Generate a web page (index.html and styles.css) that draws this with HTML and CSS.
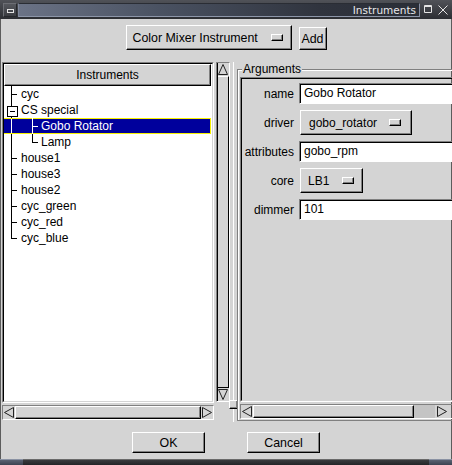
FILE: index.html
```html
<!DOCTYPE html>
<html>
<head>
<meta charset="utf-8">
<title>Instruments</title>
<link rel="stylesheet" href="styles.css">
</head>
<body>
<div class="window">
  <div class="titlebar">
    <div class="tb-menu"><span class="tb-min"></span></div>
    <div class="tb-caption">Instruments</div>
    <div class="tb-btn"><svg width="9" height="9" viewBox="0 0 9 9"><path d="M0.5 0.5H7.5V7.5H0.5Z M0.5 1.5H7.5" fill="none" stroke="#e4e4e4"/></svg></div>
    <div class="tb-btn"><svg width="10" height="10" viewBox="0 0 10 10"><path d="M0.5 0.5L9.5 9.5M9.5 0.5L0.5 9.5" fill="none" stroke="#e4e4e4"/></svg></div>
  </div>
  <div class="client">
    <div class="toolbar">
      <div class="combo combo-main"><span class="combo-text">Color Mixer Instrument</span><i class="ind"></i></div>
      <div class="btn btn-add">Add</div>
    </div>
    <div class="panes">
      <div class="left">
        <div class="tree">
          <div class="tree-inner">
            <div class="tree-header">Instruments</div>
            <div class="tree-body">
              <div class="node">cyc</div>
              <div class="node open">CS special</div>
              <div class="node child selected">Gobo Rotator</div>
              <div class="node child child-last">Lamp</div>
              <div class="node">house1</div>
              <div class="node">house3</div>
              <div class="node">house2</div>
              <div class="node">cyc_green</div>
              <div class="node">cyc_red</div>
              <div class="node last">cyc_blue</div>
            </div>
          </div>
        </div>
        <div class="hscroll hscroll-left">
          <div class="arrow"><svg width="12" height="13" viewBox="0 0 12 13"><path d="M1.5 6.5L10.5 1.5V11.5Z" fill="none" stroke="#222"/></svg></div>
          <div class="thumb-h"></div>
          <div class="arrow"><svg width="12" height="13" viewBox="0 0 12 13"><path d="M10.5 6.5L1.5 1.5V11.5Z" fill="none" stroke="#222"/></svg></div>
        </div>
      </div>
      <div class="vscroll">
        <div class="varrow"><svg width="12" height="13" viewBox="0 0 12 13"><path d="M6 1.5L10.5 11.5H1.5Z" fill="none" stroke="#222"/></svg></div>
        <div class="thumb-v"></div>
        <div class="varrow"><svg width="12" height="13" viewBox="0 0 12 13"><path d="M6 11.5L10.5 1.5H1.5Z" fill="none" stroke="#222"/></svg></div>
      </div>
      <div class="splitter"><div class="handle"></div></div>
      <div class="right">
        <div class="group">
          <div class="group-title">Arguments</div>
          <div class="args-frame">
            <div class="args">
              <div class="form">
                <div class="lbl">name</div>
                <div class="input">Gobo Rotator</div>
                <div class="lbl">driver</div>
                <div class="combo combo-driver"><span class="combo-text">gobo_rotator</span><i class="ind"></i></div>
                <div class="lbl">attributes</div>
                <div class="input">gobo_rpm</div>
                <div class="lbl">core</div>
                <div class="combo combo-core"><span class="combo-text">LB1</span><i class="ind"></i></div>
                <div class="lbl">dimmer</div>
                <div class="input">101</div>
              </div>
            </div>
          </div>
          <div class="hscroll hscroll-right">
            <div class="arrow"><svg width="12" height="13" viewBox="0 0 12 13"><path d="M1.5 6.5L10.5 1.5V11.5Z" fill="none" stroke="#222"/></svg></div>
            <div class="thumb-h thumb-r"></div>
            <div class="trough"></div>
            <div class="arrow arrow-r"><svg width="12" height="13" viewBox="0 0 12 13"><path d="M10.5 6.5L1.5 1.5V11.5Z" fill="none" stroke="#222"/></svg></div>
          </div>
        </div>
      </div>
    </div>
    <div class="buttons">
      <div class="btn btn-dlg">OK</div>
      <div class="btn btn-dlg">Cancel</div>
    </div>
  </div>
  <div class="bottombar"><div class="grip"></div><div class="grip"></div></div>
</div>
</body>
</html>
```
FILE: styles.css
```css
* { box-sizing: border-box; }
html, body { margin: 0; padding: 0; }
body {
  font-family: "Liberation Sans", Arial, sans-serif;
  font-size: 12px;
  color: #000;
  background: #d4d4d4;
}
.window {
  width: 452px;
  height: 465px;
  display: flex;
  flex-direction: column;
  overflow: hidden;
  background: #d4d4d4;
}

/* title bar */
.titlebar {
  height: 19px;
  flex: none;
  display: flex;
  align-items: center;
  padding: 0 2px 0 3px;
  background: linear-gradient(#505258, #2c2e33);
}
.tb-menu {
  width: 14px;
  height: 14px;
  display: flex;
  align-items: center;
  justify-content: center;
  background: linear-gradient(#56585e, #3a3c41);
  border: 1px solid;
  border-color: #6c6e74 #26282c #26282c #6c6e74;
}
.tb-min {
  width: 7px;
  height: 4px;
  margin-top: 3px;
  border: 1px solid #e2e2e2;
}
.tb-caption {
  flex: 1;
  height: 14px;
  margin-left: 1px;
  border: 1px solid;
  border-color: #2a2d34 #8890a3 #8d96a9 #7e879a;
  background: linear-gradient(to right, #6b7386, #4a5262 35%, #30343e 75%, #2a2e37);
  color: #e8e8ea;
  font-family: "DejaVu Sans", sans-serif;
  font-size: 10.5px;
  line-height: 12px;
  text-align: right;
  padding-right: 3px;
}
.tb-btn {
  width: 14px;
  height: 14px;
  margin-left: 1px;
  display: flex;
  align-items: center;
  justify-content: center;
}
.tb-btn:first-of-type { margin-left: 2px; }

/* client */
.client {
  flex: 1;
  display: flex;
  flex-direction: column;
  border-left: 1px solid #5c5c5c;
  border-right: 1px solid #5c5c5c;
}
.toolbar {
  height: 43px;
  flex: none;
  display: flex;
  justify-content: center;
  align-items: flex-start;
  gap: 7px;
  padding-top: 6px;
}

/* raised widgets */
.combo, .btn {
  background: #d4d4d4;
  border: 1px solid;
  border-color: #fff #000 #000 #fff;
  box-shadow: inset -1px -1px #808080;
}
.combo {
  height: 25px;
  display: flex;
  align-items: center;
  padding-left: 7px;
  padding-right: 8px;
}
.combo-text { flex: 1; white-space: nowrap; }
.ind {
  width: 12px;
  height: 7px;
  flex: none;
  border: 1px solid;
  border-color: #fff #000 #000 #fff;
  box-shadow: inset -1px -1px #808080;
}
.combo-main { width: 166px; font-size: 12.4px; padding-left: 6px; }
.btn {
  display: flex;
  align-items: center;
  justify-content: center;
}
.btn-add { width: 28px; height: 23px; margin-top: 2px; font-size: 12.4px; }

/* panes */
.panes {
  height: 360px;
  flex: none;
  display: flex;
  padding-left: 1px;
}
.left {
  width: 212px;
  flex: none;
  display: flex;
  flex-direction: column;
}
.tree {
  height: 341px;
  border: 1px solid;
  border-color: #808080 #fff #fff #808080;
}
.tree-inner {
  height: 100%;
  display: flex;
  flex-direction: column;
  background: #fff;
  border: 1px solid;
  border-color: #000 #d4d4d4 #d4d4d4 #000;
  overflow: hidden;
}
.tree-header {
  height: 22px;
  flex: none;
  margin-right: 1px;
  background: #d4d4d4;
  border: 1px solid;
  border-color: #fff #000 #000 #fff;
  box-shadow: inset -1px -1px #808080;
  text-align: center;
  line-height: 20px;
}
.tree-body { flex: 1; background: #fff; }
.node {
  position: relative;
  height: 16px;
  line-height: 16px;
  padding-left: 17px;
  margin-right: 1px;
  white-space: nowrap;
  background: linear-gradient(#000, #000) 7px 0 / 1px 100% no-repeat;
}
.node::before {
  content: "";
  position: absolute;
  left: 7px;
  top: 8px;
  width: 6px;
  border-top: 1px solid #000;
}
.node.last { background-size: 1px 9px; }
.node.open::before {
  left: 3px;
  top: 4px;
  width: 9px;
  height: 9px;
  border: 1px solid #000;
  background: #fff linear-gradient(#000, #000) center / 5px 1px no-repeat;
}
.node.child { padding-left: 37px; }
.node.child::before { left: 28px; }
.node.child::after {
  content: "";
  position: absolute;
  left: 28px;
  top: 0;
  height: 16px;
  border-left: 1px solid #000;
}
.node.child-last::after { height: 9px; }
.node.selected {
  color: #fff;
  background: #00009c linear-gradient(#fff, #fff) 7px 0 / 1px 100% no-repeat;
  box-shadow: inset 0 0 0 1px #f6f000;
  margin-left: -1px;
  padding-left: 38px;
}
.node.selected::before { border-top-color: #fff; left: 29px; }
.node.selected::after { border-left-color: #fff; left: 29px; }
.node.selected { background-position: 8px 0; }

/* scrollbars */
.hscroll {
  height: 15px;
  display: flex;
  border: 1px solid;
  border-color: #808080 #fff #fff #808080;
}
.hscroll-left { margin-top: 2px; }
.arrow {
  width: 12px;
  flex: none;
  display: flex;
  align-items: center;
  justify-content: center;
}
.thumb-h {
  flex: 1;
  border: 1px solid;
  border-color: #fff #000 #000 #fff;
  box-shadow: inset -1px -1px #808080;
}
.thumb-r { flex: none; width: 161px; }
.trough { width: 21px; flex: none; background: #c4c4c4; }
.arrow-r { width: 13px; }

.vscroll {
  width: 14px;
  height: 340px;
  flex: none;
  margin-left: 2px;
  display: flex;
  flex-direction: column;
  border: 1px solid;
  border-color: #808080 #fff #fff #808080;
  box-shadow: inset 1px 0 #000;
}
.varrow {
  height: 13px;
  flex: none;
  display: flex;
  align-items: center;
  justify-content: center;
}
.thumb-v {
  flex: 1;
  margin-left: 1px;
  border-right: 1px solid #000;
  border-bottom: 1px solid #000;
  border-top: 1px solid #fff;
}

.splitter {
  width: 7px;
  flex: none;
  display: flex;
  flex-direction: column;
  justify-content: flex-end;
  background: linear-gradient(#fff, #fff) 3px 0 / 1px 100% no-repeat;
}
.handle {
  width: 9px;
  height: 9px;
  margin-left: -1px;
  margin-bottom: 13px;
  background: #d4d4d4;
  border: 1px solid;
  border-color: #fff #000 #000 #fff;
  box-shadow: inset -1px -1px #808080;
}

/* right */
.right {
  flex: 1;
  display: flex;
  flex-direction: column;
}
.group {
  margin-top: 7px;
  height: 352px;
  display: flex;
  flex-direction: column;
  padding: 0 1px 1px 1px;
  border: 1px solid #808080;
  box-shadow: inset 1px 1px #fff;
}
.group-title {
  align-self: flex-start;
  margin: -7px 0 0 3px;
  padding: 0 1px;
  height: 13px;
  line-height: 13px;
  background: #d4d4d4;
}
.args-frame {
  margin: 1px 0 0 1px;
  height: 325px;
  border: 1px solid;
  border-color: #808080 #fff #fff #808080;
}
.args {
  height: 100%;
  overflow: hidden;
  border: 1px solid;
  border-color: #000 #d4d4d4 #d4d4d4 #000;
}
.form {
  display: grid;
  grid-template-columns: 52px 160px;
  column-gap: 5px;
  row-gap: 6px;
  padding-top: 4px;
}
.lbl {
  text-align: right;
  align-self: center;
  white-space: nowrap;
}
.input {
  height: 21px;
  background: #fff;
  border: 1px solid;
  border-color: #808080 #fff #fff #808080;
  box-shadow: inset 1px 1px #000;
  padding: 0 0 0 4px;
  line-height: 19px;
  white-space: nowrap;
}
.combo-driver { width: 112px; margin-left: 1px; padding-left: 8px; padding-right: 10px; }
.combo-core { width: 63px; margin-left: 1px; padding-left: 7px; padding-right: 8px; }
.hscroll-right { margin: 2px 0 0 1px; }

/* buttons */
.buttons {
  height: 37px;
  flex: none;
  display: flex;
  justify-content: center;
  align-items: flex-start;
  gap: 42px;
  padding-top: 10px;
}
.btn-dlg { width: 73px; height: 21px; font-size: 12.4px; }

/* bottom frame */
.bottombar {
  height: 6px;
  flex: none;
  display: flex;
  justify-content: space-between;
  background: linear-gradient(#6a6a6a 0, #6a6a6a 1px, #3a3b3e 1px, #232427);
}
.grip {
  width: 23px;
  height: 100%;
  background: linear-gradient(#8a92a3 0, #8a92a3 1px, #5a6272 1px, #3c4250);
}
```
